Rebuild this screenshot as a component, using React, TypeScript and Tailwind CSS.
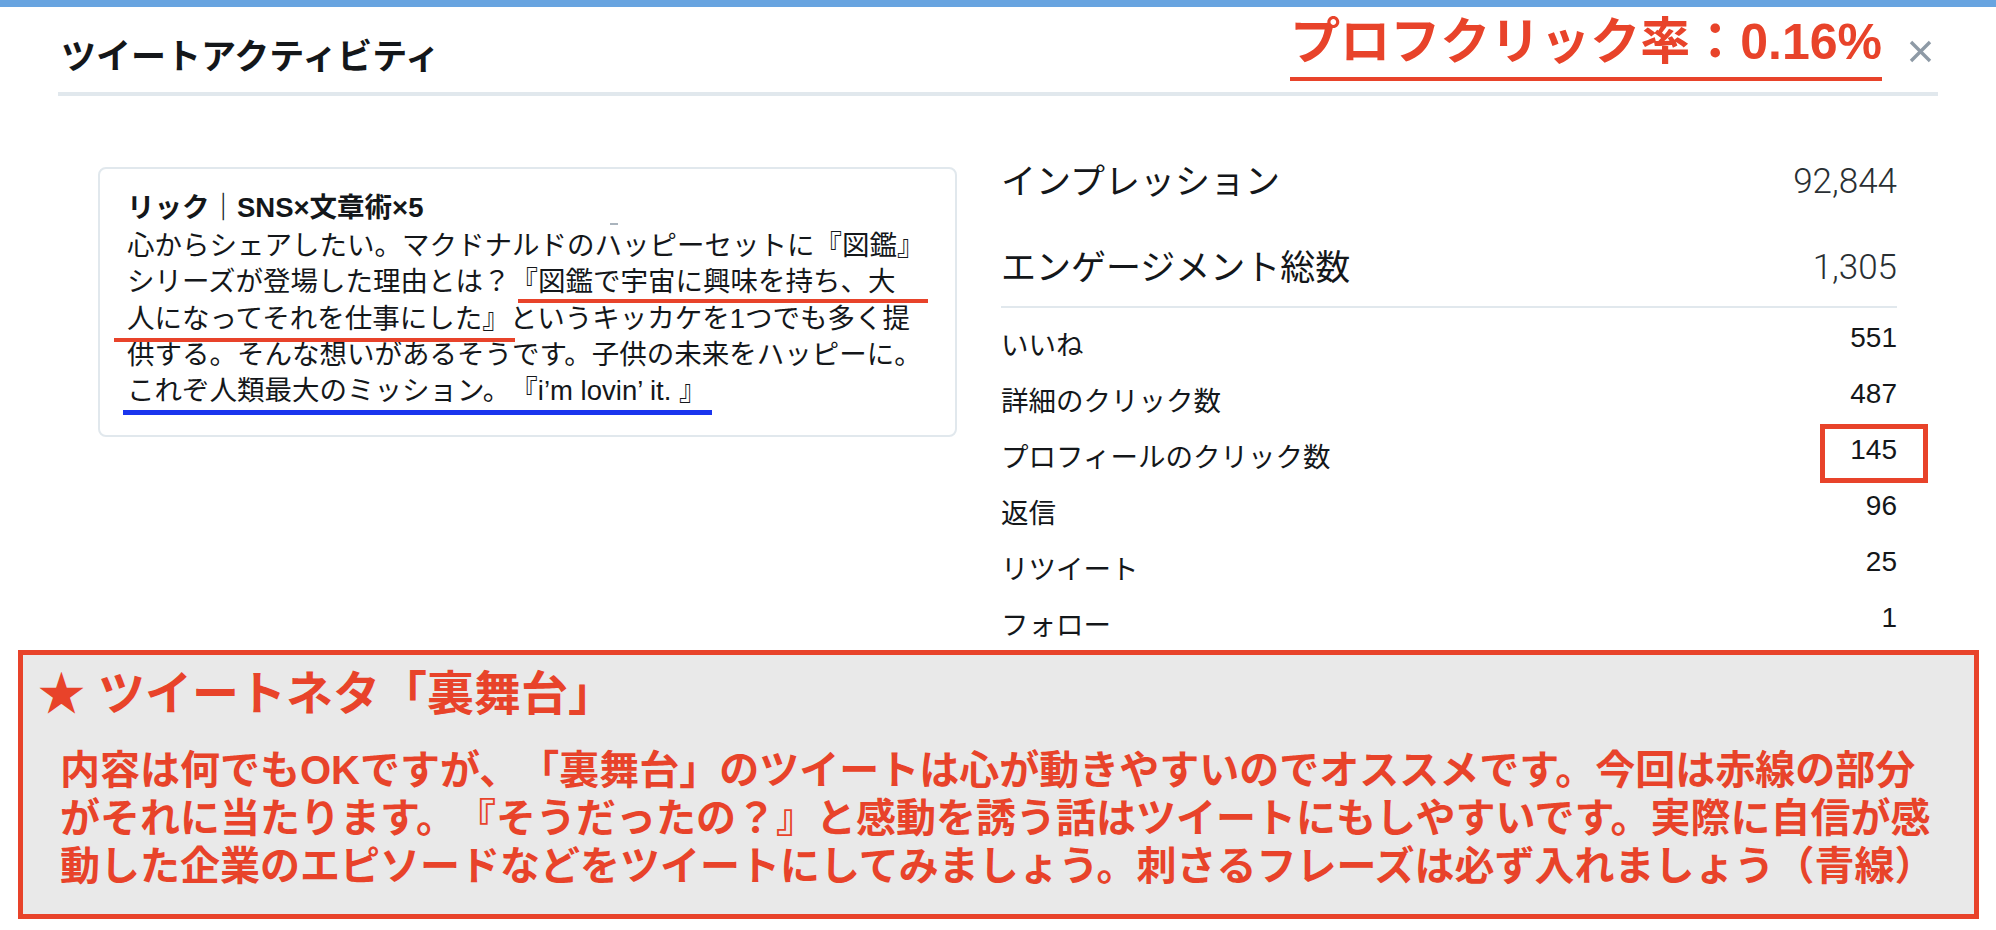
import React from "react";

function Close() {
  return (
    <svg width="25" height="25" viewBox="0 0 25 25" className="ml-[26px] mt-[32px] mr-[5px] shrink-0">
      <path d="M3 3 L22 22 M22 3 L3 22" stroke="#8e9aa6" strokeWidth="3.4" strokeLinecap="butt" fill="none" />
    </svg>
  );
}

type Row = { label: string; value: string; boxed?: boolean };

const rows: Row[] = [
  { label: "いいね", value: "551" },
  { label: "詳細のクリック数", value: "487" },
  { label: "プロフィールのクリック数", value: "145", boxed: true },
  { label: "返信", value: "96" },
  { label: "リツイート", value: "25" },
  { label: "フォロー", value: "1" },
];

export default function App() {
  return (
    <div className="w-[1996px] h-[930px] bg-white overflow-hidden text-[#14171a] [text-spacing-trim:space-all] font-['Liberation_Sans','Noto_Sans_CJK_JP',sans-serif]">
      <div className="h-[7px] bg-[#68a4e0]" />

      {/* header */}
      <div className="ml-[58px] w-[1880px] h-[89px] border-b-4 border-[#e1e8ed] flex justify-between">
        <div className="pl-[3px] pt-[30px] text-[35px] font-bold leading-[40px] whitespace-nowrap">
          ツイートアクティビティ
        </div>
        <div className="flex items-start">
          <div className="mt-[7px] pb-[7px] border-b-4 border-[#e8432a] text-[50px] font-bold leading-[56px] text-[#e8432a] whitespace-nowrap">
            プロフクリック率：0.16%
          </div>
          <Close />
        </div>
      </div>

      {/* main */}
      <div className="h-[554px] flex items-start pl-[98px] gap-[44px]">
        {/* tweet card */}
        <div className="relative w-[859px] h-[270px] mt-[71px] border-2 border-[#e1e8ed] rounded-[8px] pl-[27px] pt-[21px] text-[27.5px]">
          <div className="font-bold leading-[36px] whitespace-nowrap">リック｜SNS×文章術×5</div>
          <span className="absolute left-[510px] top-[54px] w-[8px] h-[2px] bg-[#aab4bd]" />
          <div className="mt-[2px] leading-[36.25px] whitespace-nowrap">
            <div>心からシェアしたい。マクドナルドのハッピーセットに『図鑑』</div>
            <div className="relative">
              シリーズが登場した理由とは？『図鑑で宇宙に興味を持ち、大
              <span className="absolute left-[391px] top-[35px] w-[410px] h-[4px] bg-[#e8432a]" />
            </div>
            <div className="relative">
              人になってそれを仕事にした』というキッカケを1つでも多く提
              <span className="absolute -left-[13px] top-[37px] w-[401px] h-[4px] bg-[#e8432a]" />
            </div>
            <div>供する。そんな想いがあるそうです。子供の未来をハッピーに。</div>
            <div className="relative">
              これぞ人類最大のミッション。『i’m lovin’ it. 』
              <span className="absolute -left-[4px] top-[37px] w-[589px] h-[5px] bg-[#1a35ee]" />
            </div>
          </div>
        </div>

        {/* metrics */}
        <div className="w-[896px] flex flex-col mt-[50px]">
          <div className="h-[72px] flex items-center justify-between">
            <span className="text-[35px] leading-[44px] whitespace-nowrap">インプレッション</span>
            <span className="font-['Roboto',sans-serif] font-light text-[35px] leading-[40px] text-[#292f33]">92,844</span>
          </div>
          <div className="mt-[14px] h-[72px] flex items-center justify-between">
            <span className="text-[35px] leading-[44px] whitespace-nowrap">エンゲージメント総数</span>
            <span className="font-['Roboto',sans-serif] font-light text-[35px] leading-[40px] text-[#292f33]">1,305</span>
          </div>
          <div className="mt-[2px] h-[2px] bg-[#e1e8ed]" />
          <div className="mt-[10px] flex flex-col">
            {rows.map((r) => (
              <div key={r.label} className="h-[56px] flex items-center justify-between">
                <span className="text-[27.5px] leading-[36px] whitespace-nowrap">{r.label}</span>
                <span className="relative mb-[17px] text-[28px] leading-[32px]">
                  {r.value}
                  {r.boxed && (
                    <span className="absolute -right-[31px] -top-[10px] w-[108px] h-[59px] border-[5px] border-[#e8432a]" />
                  )}
                </span>
              </div>
            ))}
          </div>
        </div>
      </div>

      {/* annotation box */}
      <div className="ml-[18px] w-[1961px] h-[269px] border-[5px] border-[#e8432a] bg-[#e9e9e9] text-[#e8432a] font-bold">
        <div className="pl-[15px] pt-[11px] text-[47px] leading-[56px] whitespace-nowrap">★ ツイートネタ「裏舞台」</div>
        <div className="pl-[37px] mt-[24px] text-[40px] leading-[48px] whitespace-nowrap">
          <div>内容は何でもOKですが、「裏舞台」のツイートは心が動きやすいのでオススメです。今回は赤線の部分</div>
          <div>がそれに当たります。『そうだったの？』と感動を誘う話はツイートにもしやすいです。実際に自信が感</div>
          <div>動した企業のエピソードなどをツイートにしてみましょう。刺さるフレーズは必ず入れましょう（青線）</div>
        </div>
      </div>
    </div>
  );
}
